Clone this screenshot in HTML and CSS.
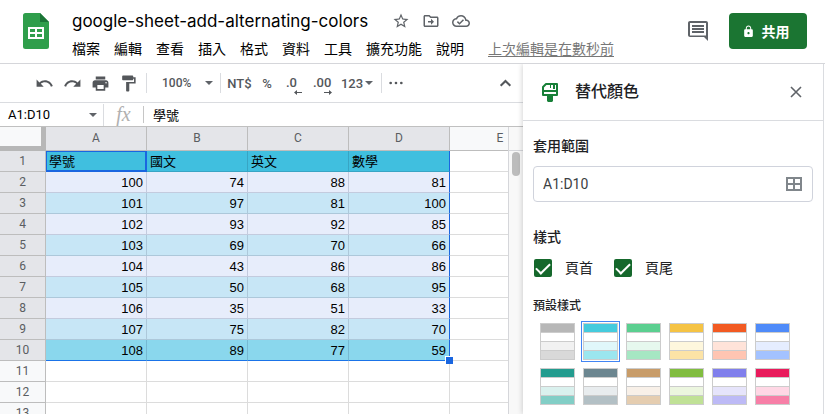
FILE: index.html
```html
<!DOCTYPE html>
<html lang="zh-Hant">
<head>
<meta charset="utf-8">
<title>google-sheet-add-alternating-colors</title>
<link rel="stylesheet" href="styles.css">
</head>
<body>
<header class="topbar">
  <svg class="logo" viewBox="0 0 26 36" aria-hidden="true">
    <path d="M2.500 0H17l9 9v24.500a2.500 2.500 0 0 1-2.500 2.500h-21A2.500 2.500 0 0 1 0 33.500v-31A2.500 2.500 0 0 1 2.500 0z" fill="#2f9e4b"/>
    <path d="M17 0l9 9h-9z" fill="#1b7436"/>
    <path d="M5 14h16v12H5z" fill="#fff"/>
    <path d="M7 16h5v3H7zM14 16h5v3h-5zM7 21h5v3H7zM14 21h5v3h-5z" fill="#2f9e4b"/>
  </svg>
  <div class="doc">
    <div class="doc-title">
      <h1>google-sheet-add-alternating-colors</h1>
      <button class="icon-btn" aria-label="加上星號"><svg viewBox="0 0 24 24"><path d="M22 9.240l-7.190-.62L12 2 9.190 8.630 2 9.240l5.460 4.730L5.820 21 12 17.270 18.180 21l-1.630-7.030L22 9.240zM12 15.400l-3.760 2.270 1-4.280-3.320-2.880 4.380-.38L12 6.100l1.710 4.040 4.380.38-3.320 2.880 1 4.280L12 15.400z"/></svg></button>
      <button class="icon-btn" aria-label="移動"><svg viewBox="0 0 24 24"><path d="M20 6h-8l-2-2H4c-1.100 0-2 .9-2 2v12c0 1.100.9 2 2 2h16c1.100 0 2-.9 2-2V8c0-1.100-.9-2-2-2zm0 12H4V6h5.200l2 2H20v10zm-8-1l4-4-4-4v3H8v2h4z"/></svg></button>
      <button class="icon-btn" aria-label="雲端狀態"><svg viewBox="0 0 24 24"><path d="M19.350 10.040C18.670 6.590 15.640 4 12 4 9.110 4 6.600 5.640 5.350 8.040 2.340 8.360 0 10.910 0 14c0 3.310 2.690 6 6 6h13c2.760 0 5-2.240 5-5 0-2.640-2.050-4.780-4.650-4.960zM19 18H6c-2.210 0-4-1.790-4-4 0-2.050 1.530-3.760 3.560-3.970l1.070-.11.5-.95C8.080 7.140 9.940 6 12 6c2.620 0 4.880 1.860 5.390 4.430l.3 1.500 1.530.11c1.560.1 2.780 1.410 2.780 2.960 0 1.650-1.350 3-3 3zm-9-3.820l-2.090-2.090L6.500 13.500 10 17l6.010-6.010-1.410-1.410z"/></svg></button>
    </div>
    <nav class="menu">
      <button>檔案</button><button>編輯</button><button>查看</button><button>插入</button><button>格式</button><button>資料</button><button>工具</button><button>擴充功能</button><button>說明</button>
      <a class="last-edit" href="#">上次編輯是在數秒前</a>
    </nav>
  </div>
  <button class="comments" aria-label="註解"><svg viewBox="0 0 24 24"><path d="M22 4c0-1.100-.9-2-2-2H4c-1.100 0-2 .9-2 2v12c0 1.100.9 2 2 2h14l4 4V4zM20 16.500H4V4h16zM18 12H6v2h12v-2zm0-3H6v2h12V9zm0-3H6v2h12V6z"/></svg></button>
  <button class="share"><svg viewBox="0 0 24 24"><path d="M18 8h-1V6c0-2.760-2.240-5-5-5S7 3.240 7 6v2H6c-1.100 0-2 .9-2 2v10c0 1.100.9 2 2 2h12c1.100 0 2-.9 2-2V10c0-1.100-.9-2-2-2zm-6 9c-1.100 0-2-.9-2-2s.9-2 2-2 2 .9 2 2-.9 2-2 2zm3.100-9H8.900V6c0-1.710 1.390-3.100 3.100-3.100 1.710 0 3.100 1.390 3.100 3.100v2z"/></svg>共用</button>
</header>
<div class="workspace">
  <main class="sheet">
    <div class="toolbar">
      <button class="tool" aria-label="復原"><svg viewBox="0 0 24 24"><path d="M12.500 8c-2.650 0-5.050.99-6.900 2.600L2 7v9h9l-3.620-3.620c1.390-1.160 3.160-1.880 5.120-1.880 3.540 0 6.550 2.310 7.600 5.500l2.370-.78C21.080 11.030 17.150 8 12.500 8z"/></svg></button>
      <button class="tool" aria-label="重做"><svg viewBox="0 0 24 24"><path d="M18.400 10.600C16.550 8.990 14.150 8 11.500 8c-4.650 0-8.580 3.030-9.960 7.220L3.900 16c1.050-3.190 4.050-5.500 7.600-5.500 1.950 0 3.730.72 5.120 1.880L13 16h9V7l-3.600 3.600z"/></svg></button>
      <button class="tool" aria-label="列印"><svg viewBox="0 0 24 24"><path d="M19 8H5c-1.660 0-3 1.340-3 3v6h4v4h12v-4h4v-6c0-1.660-1.340-3-3-3zm-3 11H8v-5h8v5zm3-7c-.55 0-1-.45-1-1s.45-1 1-1 1 .45 1 1-.45 1-1 1zm-1-9H6v4h12V3z"/></svg></button>
      <button class="tool" aria-label="複製格式"><svg viewBox="0 0 24 24"><path d="M18 4V3c0-.55-.45-1-1-1H5c-.55 0-1 .45-1 1v4c0 .55.45 1 1 1h12c.55 0 1-.45 1-1V6h1v4H9v11c0 .55.45 1 1 1h2c.55 0 1-.45 1-1v-9h8V4h-3z"/></svg></button>
      <span class="rule"></span>
      <button class="zoom">100%<i class="caret"></i></button>
      <span class="rule"></span>
      <button class="currency">NT$</button>
      <button class="percent">%</button>
      <button class="decimals fewer">.0<svg viewBox="0 0 8 5"><path d="M3 0v2h5v1H3v2L0 2.500z"/></svg></button>
      <button class="decimals more">.00<svg viewBox="0 0 8 5"><path d="M5 0v2H0v1h5v2l3-2.500z"/></svg></button>
      <button class="number-format">123<i class="caret"></i></button>
      <span class="rule"></span>
      <button class="tool dots" aria-label="更多"><svg viewBox="0 0 24 24"><path d="M4 10a2 2 0 1 0 0 4 2 2 0 0 0 0-4zM12 10a2 2 0 1 0 0 4 2 2 0 0 0 0-4zM20 10a2 2 0 1 0 0 4 2 2 0 0 0 0-4z"/></svg></button>
      <button class="tool collapse" aria-label="隱藏選單"><svg viewBox="0 0 24 24"><path d="M12 7l-7 7 1.800 1.800L12 10.600l5.200 5.200L19 14z"/></svg></button>
    </div>
    <div class="formula">
      <button class="name-box">A1:D10<i class="caret"></i></button>
      <span class="fx">fx</span>
      <input class="formula-input" aria-label="公式" value="學號">
    </div>
    <div class="grid-area">
      <div class="grid-view">
        <table class="grid">
          <colgroup><col class="index-col"><col><col><col><col><col></colgroup>
          <thead><tr><th class="corner"></th><th class="on">A</th><th class="on">B</th><th class="on">C</th><th class="on">D</th><th>E</th></tr></thead>
          <tbody>
            <tr class="picked head"><th>1</th><td class="active">學號</td><td>國文</td><td>英文</td><td>數學</td><td></td></tr>
            <tr class="picked"><th>2</th><td>100</td><td>74</td><td>88</td><td>81</td><td></td></tr>
            <tr class="picked alt"><th>3</th><td>101</td><td>97</td><td>81</td><td>100</td><td></td></tr>
            <tr class="picked"><th>4</th><td>102</td><td>93</td><td>92</td><td>85</td><td></td></tr>
            <tr class="picked alt"><th>5</th><td>103</td><td>69</td><td>70</td><td>66</td><td></td></tr>
            <tr class="picked"><th>6</th><td>104</td><td>43</td><td>86</td><td>86</td><td></td></tr>
            <tr class="picked alt"><th>7</th><td>105</td><td>50</td><td>68</td><td>95</td><td></td></tr>
            <tr class="picked"><th>8</th><td>106</td><td>35</td><td>51</td><td>33</td><td></td></tr>
            <tr class="picked alt"><th>9</th><td>107</td><td>75</td><td>82</td><td>70</td><td></td></tr>
            <tr class="picked foot"><th>10</th><td>108</td><td>89</td><td>77</td><td class="last">59<span class="handle"></span></td><td></td></tr>
            <tr><th>11</th><td></td><td></td><td></td><td></td><td></td></tr>
            <tr><th>12</th><td></td><td></td><td></td><td></td><td></td></tr>
            <tr><th>13</th><td></td><td></td><td></td><td></td><td></td></tr>
          </tbody>
        </table>
      </div>
      <div class="scroll"><div class="scroll-cap"></div><div class="thumb"></div></div>
    </div>
  </main>
  <aside class="panel">
    <div class="panel-head">
      <svg class="panel-icon" viewBox="0 0 16 19" aria-hidden="true"><path d="M4 1h11v11H1V4z" fill="none" stroke="#188038" stroke-width="2" stroke-linejoin="round"/><path d="M8 1h1v4H8zM11 1h2v5h-2zM1 7h14v2H1zM5 12h6v6l-1 1H6l-1-1z" fill="#188038"/></svg>
      <h2>替代顏色</h2>
      <button class="close" aria-label="關閉"><svg viewBox="0 0 12 12"><path d="M1 1l10 10M11 1L1 11" stroke="#5f6368" stroke-width="1.600"/></svg></button>
    </div>
    <div class="panel-body">
      <label class="label" for="range">套用範圍</label>
      <div class="range">
        <input id="range" value="A1:D10">
        <svg viewBox="0 0 16 14" aria-hidden="true"><path d="M1 1h14v12H1zM8 1v12M1 7h14" fill="none" stroke="#80868b" stroke-width="2"/></svg>
      </div>
      <h3 class="label">樣式</h3>
      <div class="checks">
        <label><input type="checkbox" checked>頁首</label>
        <label><input type="checkbox" checked>頁尾</label>
      </div>
      <h4 class="label presets">預設樣式</h4>
      <div class="swatches">
        <button class="swatch gray" aria-label="灰色"><i></i><i></i><i></i><i></i></button>
        <button class="swatch cyan chosen" aria-label="青色"><i></i><i></i><i></i><i></i></button>
        <button class="swatch green" aria-label="綠色"><i></i><i></i><i></i><i></i></button>
        <button class="swatch yellow" aria-label="黃色"><i></i><i></i><i></i><i></i></button>
        <button class="swatch orange" aria-label="橘色"><i></i><i></i><i></i><i></i></button>
        <button class="swatch blue" aria-label="藍色"><i></i><i></i><i></i><i></i></button>
        <button class="swatch teal" aria-label="藍綠色"><i></i><i></i><i></i><i></i></button>
        <button class="swatch slate" aria-label="藍灰色"><i></i><i></i><i></i><i></i></button>
        <button class="swatch brown" aria-label="棕色"><i></i><i></i><i></i><i></i></button>
        <button class="swatch lime" aria-label="淺綠色"><i></i><i></i><i></i><i></i></button>
        <button class="swatch violet" aria-label="紫色"><i></i><i></i><i></i><i></i></button>
        <button class="swatch pink" aria-label="粉紅色"><i></i><i></i><i></i><i></i></button>
      </div>
    </div>
  </aside>
</div>
</body>
</html>
```
FILE: styles.css
```css
* { box-sizing: border-box; }
body {
  margin: 0;
  height: 100vh;
  display: flex;
  flex-direction: column;
  overflow: hidden;
  background: #fff;
  color: #000;
  font-family: Roboto, "Noto Sans CJK TC", sans-serif;
  font-size: 14px;
}
h1, h2, h3, h4 { margin: 0; }
button {
  display: flex;
  align-items: center;
  justify-content: center;
  margin: 0;
  padding: 0;
  border: 0;
  background: none;
  color: inherit;
  font: inherit;
}
svg { display: block; fill: currentColor; }

.topbar {
  flex: none;
  display: flex;
  align-items: flex-start;
  height: 64px;
  padding: 0 18px 0 23px;
  border-bottom: 1px solid #d5d6da;
}
.logo { width: 26px; height: 36px; margin-top: 13px; }
.doc { flex: 1; min-width: 0; margin-left: 23px; padding-top: 8px; }
.doc-title { display: flex; align-items: center; gap: 12px; height: 26px; color: #5f6368; }
.doc-title h1 {
  margin-right: 12px;
  color: #000;
  font: 400 17px/26px Inter, sans-serif;
  white-space: nowrap;
}
.icon-btn, .icon-btn svg { width: 18px; height: 18px; }
.menu { display: flex; gap: 14px; height: 28px; align-items: center; white-space: nowrap; }
.last-edit { margin-left: 10px; color: #777; text-decoration: underline; text-underline-offset: 2px; }
.comments { width: 24px; height: 24px; margin: 19px 19px 0 0; color: #5f6368; }
.comments svg { width: 24px; height: 24px; }
.share {
  gap: 7px;
  width: 78px;
  height: 36px;
  margin-top: 13px;
  padding-right: 5px;
  border-radius: 4px;
  background: #1b7532;
  color: #fff;
  font-weight: 700;
}
.share svg { width: 13px; height: 13px; }

.workspace { flex: 1; min-height: 0; display: flex; }
.sheet { flex: 1; min-width: 0; display: flex; flex-direction: column; }

.toolbar {
  flex: none;
  display: flex;
  align-items: center;
  height: 39px;
  padding: 0 4px 0 30px;
  border-bottom: 1px solid #dadce0;
  color: #54575b;
  font-size: 13px;
  font-weight: 500;
}
.tool { width: 28px; height: 28px; }
.tool svg { width: 19px; height: 19px; }
.rule { width: 1px; height: 20px; margin: 0 4px; background: #dadce0; }
.rule + .zoom { margin-left: -4px; }
.caret {
  border: 4px solid transparent;
  border-top-color: #5f6368;
  border-bottom: 0;
}
.zoom { width: 73px; padding: 0 7px 0 15px; margin-right: -4px; justify-content: space-between; font-size: 12px; }
.currency { width: 29px; }
.percent { width: 26px; margin-right: 6px; }
.decimals { flex-direction: column; align-items: flex-start; padding-top: 4px; font-size: 13px; line-height: 14px; }
.fewer { width: 16px; margin-right: 11px; }
.more { width: 19px; margin-right: 5px; }
.decimals svg { width: 8px; height: 5px; align-self: flex-end; }
.number-format { width: 40px; gap: 2px; }
.dots svg { width: 16px; height: 16px; }
.dots { margin-left: -4px; }
.collapse { margin-left: auto; }

.formula {
  flex: none;
  display: flex;
  align-items: center;
  height: 24px;
  border-bottom: 1px solid #c0c0c0;
  font-size: 13px;
}
.name-box { width: 104px; height: 22px; padding: 0 6px 0 8px; justify-content: space-between; border-right: 1px solid #dadce0; }
.fx {
  width: 40px;
  border-right: 1px solid #c6c6c6;
  color: #b0b0b0;
  font: italic 20px/17px "Liberation Serif", serif;
  text-align: center;
}
.formula-input { flex: 1; min-width: 0; padding: 0 9px; border: 0; font: inherit; background: none; outline: 0; }

.grid-area { flex: 1; min-height: 0; display: flex; }
.grid-view { flex: 1; min-width: 0; overflow: hidden; border-right: 1px solid #d5d6da; }
.grid { width: 551px; table-layout: fixed; border-collapse: separate; border-spacing: 0; }
.index-col { width: 46px; }
.grid th, .grid td { height: 21px; padding: 0; border: solid #dcdcdc; border-width: 0 1px 1px 0; line-height: 18px; }
.grid th { padding-bottom: 1px; background: #f8f9fa; border-color: #bdbdbd; color: #5a5d61; font-size: 12px; font-weight: 400; }
.grid thead th { height: 24px; }
.grid thead .on, .grid .picked th { background: #e4e5e9; }
.grid thead .corner { border: solid #b7b7b7; border-width: 0 5px 5px 0; }
.grid td { padding: 1px 3px 0; font: 13px/18px "Liberation Sans", "Noto Sans CJK TC", sans-serif; text-align: right; }
.picked td:not(:last-child) { background: #e7edfb; border-color: #c3cbde; }
.alt td:not(:last-child) { background: #c7e6f6; border-color: #adc8da; }
.head td:not(:last-child) { background: #40bfdf; border-color: #38a5c4; text-align: left; }
.foot td:not(:last-child) { background: #8ad7ed; border-color: #76b9d2; border-bottom-color: #1a73e8; }
.grid .picked td:nth-child(5) { border-right-color: #1a66e0; }
.grid .head .active { border-color: #1a66e0; box-shadow: inset 1px 1px #1a66e0, inset -1px -1px #1a66e0; }
.last { position: relative; }
.handle { position: absolute; right: -4px; bottom: -4px; width: 8px; height: 8px; border: solid #fff; border-width: 1px 0 0 1px; background: #1a66e0; z-index: 1; }
.scroll { width: 14px; background: #f8f8f8; }
.scroll-cap { height: 24px; border-bottom: 1px solid #d5d6da; }
.thumb { width: 8px; height: 24px; margin: 1px 3px; border-radius: 4px; background: #bcbcbc; }

.panel {
  flex: none;
  width: 301px;
  margin-right: 1px;
  border-right: 1px solid #dadce0;
  background: #fff;
  box-shadow: -1px 0 5px rgba(0, 0, 0, .16);
  color: #202124;
  clip-path: inset(0 0 0 -8px);
}
.panel-head { display: flex; align-items: center; height: 57px; padding: 0 21px 0 19px; border-bottom: 1px solid #dadce0; }
.panel-icon { width: 16px; height: 19px; }
.panel-head h2 { margin-left: 17px; font-size: 16px; font-weight: 500; line-height: 24px; }
.close { margin-left: auto; width: 13px; height: 13px; }
.close svg { width: 12px; height: 12px; }
.panel-body { padding: 15px 10px 0; }
.label { display: block; font-size: 14px; font-weight: 500; line-height: 20px; }
.range {
  display: flex;
  align-items: center;
  height: 36px;
  margin: 10px 0 25px;
  padding: 0 10px 0 9px;
  border: 1px solid #d0d3dc;
  border-radius: 4px;
}
.range input { flex: 1; min-width: 0; padding: 0; border: 0; outline: 0; background: none; color: #3c4043; font: inherit; }
.range svg { width: 16px; height: 14px; }
.checks { display: flex; gap: 21px; margin: 11px 0 18px 1px; }
.checks label { display: flex; align-items: center; gap: 13px; line-height: 20px; }
.checks input {
  appearance: none;
  display: grid;
  place-items: center;
  width: 18px;
  height: 18px;
  margin: 0;
  border-radius: 2px;
  background: #15682c;
}
.checks input::before {
  content: "";
  width: 12px;
  height: 6px;
  margin-bottom: 3px;
  border: solid #fff;
  border-width: 0 0 2px 2px;
  transform: rotate(-45deg);
}
.presets { font-size: 12px; }
.swatches { display: flex; flex-wrap: wrap; gap: 8px; padding: 7px; }
.swatch {
  flex-direction: column;
  align-items: stretch;
  gap: 1px;
  width: 35px;
  height: 37px;
  padding: 1px;
  background: #ccc;
}
.swatch i { flex: 1; background: #fff; }
.chosen { outline: 1px solid #4285f4; outline-offset: 1px; }
.swatch i:nth-child(1) { background: var(--a); }
.swatch i:nth-child(3) { background: var(--b); }
.swatch i:nth-child(4) { background: var(--c); }
.gray { --a: #b7b7b7; --b: #f1f1f1; --c: #d9d9d9; }
.cyan { --a: #45cbdd; --b: #e0f7fa; --c: #9be6ef; }
.green { --a: #5bcf90; --b: #e6f8ee; --c: #a6e7c3; }
.yellow { --a: #f5c344; --b: #fef7dd; --c: #fce3a6; }
.orange { --a: #f25a22; --b: #ffe3d9; --c: #ffc5b2; }
.blue { --a: #4f8bf9; --b: #e5edff; --c: #a3c2ff; }
.teal { --a: #239c8f; --b: #daf1ee; --c: #82cec6; }
.slate { --a: #6c8690; --b: #e8ecee; --c: #b3c0c5; }
.brown { --a: #c89c69; --b: #f8f0e8; --c: #e5cdb0; }
.lime { --a: #81bd40; --b: #ecf6df; --c: #c0e196; }
.violet { --a: #807fec; --b: #e6e4fb; --c: #bdbaf6; }
.pink { --a: #e91b5c; --b: #ffd7e5; --c: #f77fa7; }
```
